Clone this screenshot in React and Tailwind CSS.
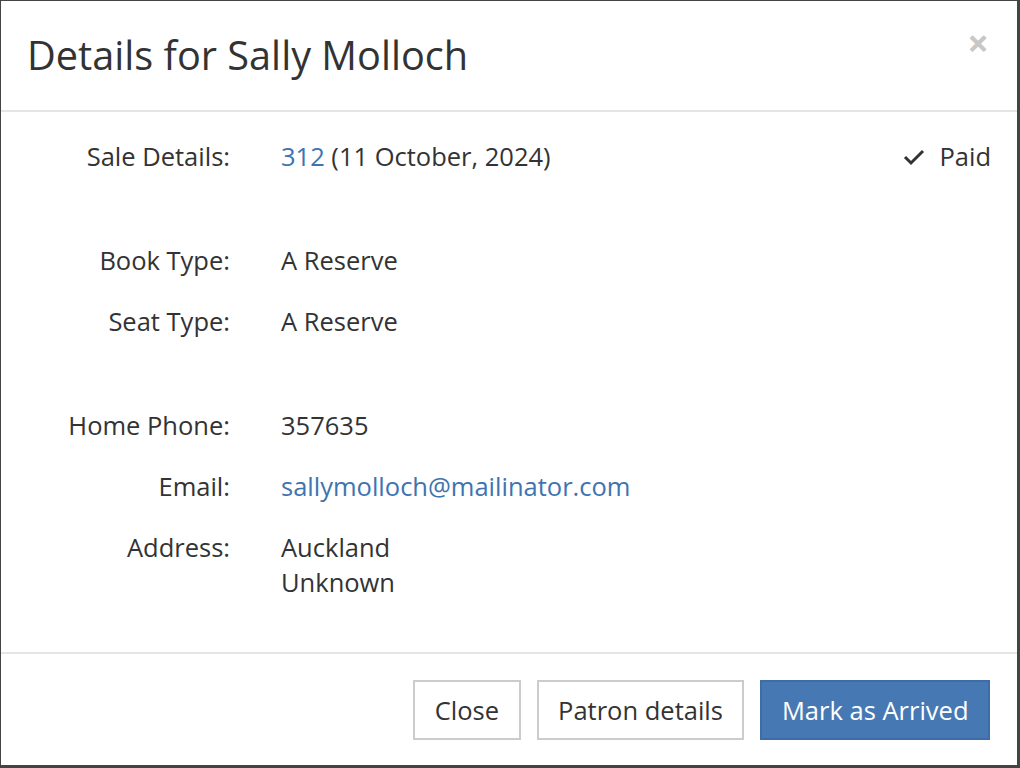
import React from 'react';

const rows = [
  { label: 'Book Type:', value: 'A Reserve', gapTop: true },
  { label: 'Seat Type:', value: 'A Reserve' },
  { label: 'Home Phone:', value: '357635', gapTop: true },
  { label: 'Email:', value: 'sallymolloch@mailinator.com', link: true },
  { label: 'Address:', value: ['Auckland', 'Unknown'] },
];

const Row = ({ label, children, className = '' }) => (
  <div className={`flex items-start ${className}`}>
    <div className="w-[203px] shrink-0 text-right">{label}</div>
    <div className="ml-[51px] flex-1">{children}</div>
  </div>
);

export default function App() {
  return (
    <div className="w-[1020px] h-[768px] bg-[#444] pl-px pt-px pr-[3px] pb-[3px]" style={{ fontFamily: '"Open Sans", sans-serif' }}>
      <div className="h-full bg-white flex flex-col text-[#333] text-[25.5px] leading-[35px]">
        {/* header */}
        <div className="h-[111px] shrink-0 border-b-2 border-[#e5e5e5] flex items-center justify-between pl-[26px] pr-[28px]">
          <h3 className="text-[39.7px] leading-[48px] font-normal text-[#333] -mt-[2px]">Details for Sally Molloch</h3>
          <button className="text-[38px] leading-none font-bold text-[#c7c7c7] -mt-[28px]">×</button>
        </div>

        {/* body */}
        <div className="flex-1 px-[26px] pt-[27px]">
          <Row label="Sale Details:">
            <div className="flex justify-between">
              <span>
                <a className="text-[#3e74b0]">312</a> (11 October, 2024)
              </span>
              <span className="flex items-center">
                <svg width="22" height="18" viewBox="0 0 22 18" className="mr-[14px]">
                  <polyline points="2,9 8,15 20,3" fill="none" stroke="#333" strokeWidth="3" />
                </svg>
                Paid
              </span>
            </div>
          </Row>
          {rows.map((r) => (
            <Row key={r.label} label={r.label} className={r.gapTop ? 'mt-[69px]' : 'mt-[26px]'}>
              {Array.isArray(r.value) ? (
                r.value.map((v) => <div key={v}>{v}</div>)
              ) : r.link ? (
                <a className="text-[#3e74b0]">{r.value}</a>
              ) : (
                r.value
              )}
            </Row>
          ))}
        </div>

        {/* footer */}
        <div className="h-[113px] shrink-0 border-t-2 border-[#e5e5e5] flex items-start justify-end gap-[16px] pt-[26px] pr-[27px]">
          <button className="h-[60px] px-[19.5px] border-2 border-[#ccc] bg-white text-[#333]">Close</button>
          <button className="h-[60px] px-[19.5px] border-2 border-[#ccc] bg-white text-[#333]">Patron details</button>
          <button className="h-[60px] px-[19.5px] border-2 border-[#3d6ca6] bg-[#4679b4] text-white">Mark as Arrived</button>
        </div>
      </div>
    </div>
  );
}
